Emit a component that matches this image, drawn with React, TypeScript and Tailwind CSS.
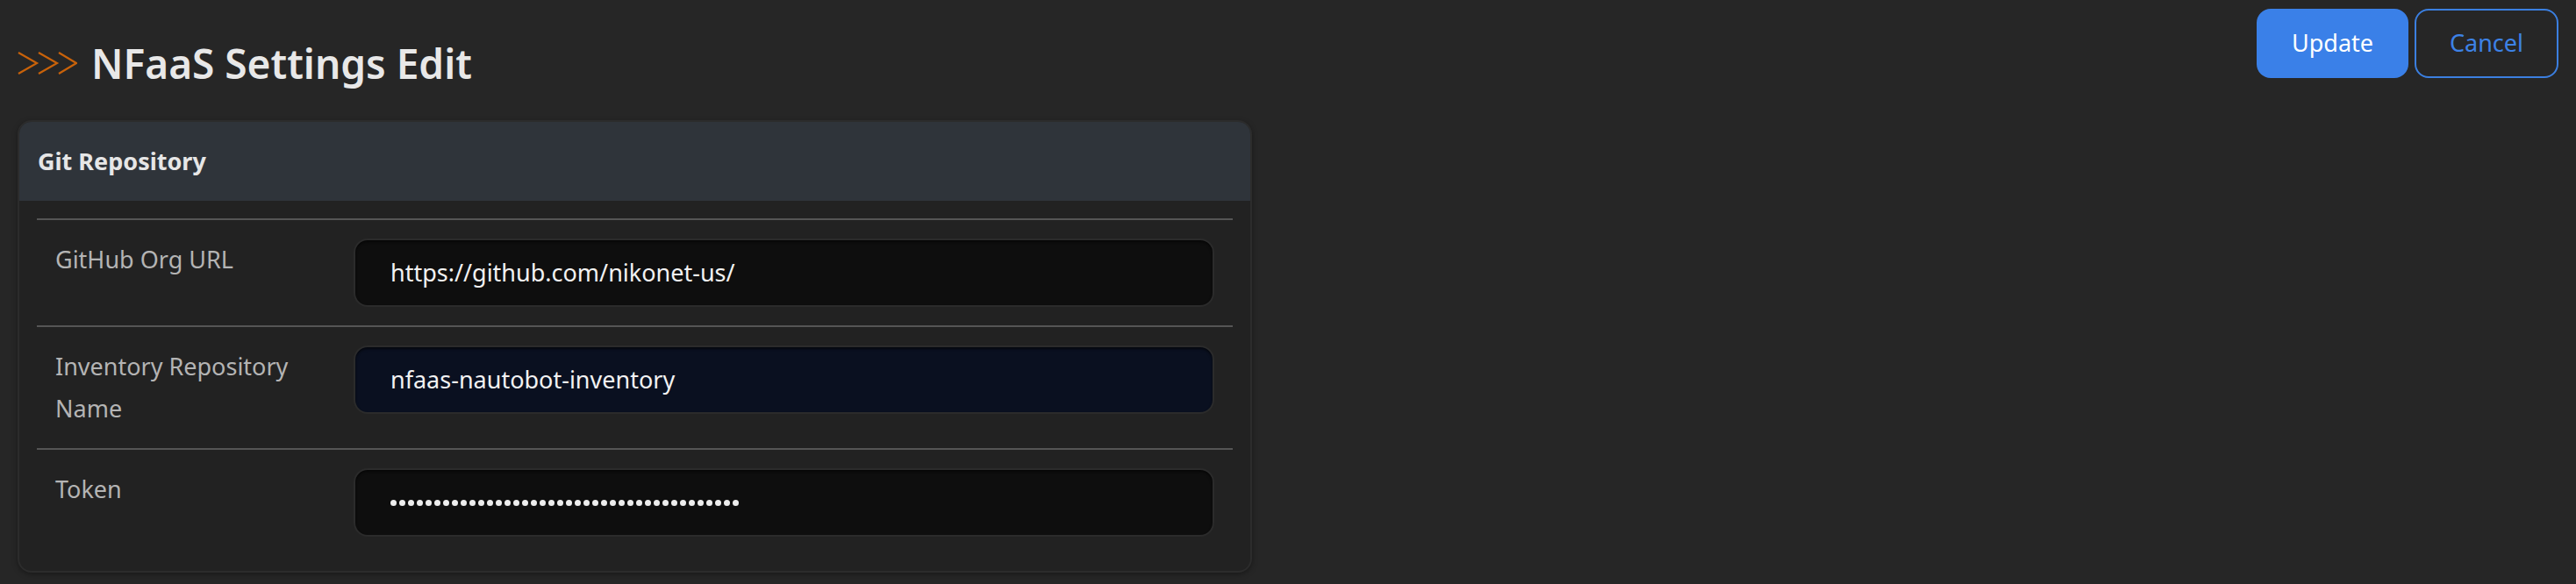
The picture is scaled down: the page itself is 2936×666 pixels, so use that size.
import React from 'react'

const fieldRows = [
  { label: ['GitHub Org URL'], value: 'https://github.com/nikonet-us/', kind: 'text' },
  { label: ['Inventory Repository', 'Name'], value: 'nfaas-nautobot-inventory', kind: 'autofill' },
  { label: ['Token'], value: '', kind: 'password' },
]

const Chevrons = () => (
  <svg width="68" height="26" viewBox="0 0 68 26" fill="none" stroke="#c8620a" strokeWidth="2.2">
    <polyline points="1,1 22,13 1,25" />
    <polyline points="24,1 45,13 24,25" />
    <polyline points="47,1 67,13 47,25" />
  </svg>
)

const App = () => {
  return (
    <div className="min-h-[666px] w-full bg-[#262626] font-['Noto_Sans',sans-serif]">
      {/* Title + actions */}
      <div className="flex items-start justify-between px-[20px]">
        <div className="mt-[42px] flex h-[60px] items-center gap-[16px]">
          <Chevrons />
          <h1 className="text-[46px] font-semibold leading-[60px] text-[#e8e8e8]">NFaaS Settings Edit</h1>
        </div>
        <div className="mt-[10px] flex gap-[7px]">
          <button className="h-[79px] w-[173px] rounded-[16px] bg-[#3a80e8] text-[27px] text-white">Update</button>
          <button className="h-[79px] w-[164px] rounded-[16px] border-2 border-[#3b7fe0] text-[27px] text-[#3d82e6]">
            Cancel
          </button>
        </div>
      </div>

      {/* Git Repository card */}
      <div className="mx-[20px] mt-[35px] w-[1407px] overflow-hidden rounded-[16px] border-2 border-[#2c2c2c] bg-[#222222] shadow-[0_2px_6px_rgba(0,0,0,0.35)]">
        <div className="flex h-[90px] items-center bg-[#2f343a] px-[21px]">
          <span className="text-[27px] font-bold text-[#e6e6e6]">Git Repository</span>
        </div>
        <div className="px-[20px] pt-[20px] pb-[18px]">
          {fieldRows.map((row) => (
            <div key={row.label.join(' ')} className="grid grid-cols-[361px_1fr] border-t-2 border-[#555555] py-[21px]">
              <div className="pl-[21px] text-[27px] leading-[48px] text-[#b4b4b4]">
                {row.label.map((line) => (
                  <div key={line} className="whitespace-nowrap">{line}</div>
                ))}
              </div>
              <div className="pr-[21px]">
                <div
                  className={
                    'flex h-[78px] items-center rounded-[16px] border-2 border-[#2b2b2b] px-[40px] shadow-[inset_0_2px_3px_rgba(0,0,0,0.6)] ' +
                    (row.kind === 'autofill' ? 'bg-[#0a1020]' : 'bg-[#0e0e0e]')
                  }
                >
                  {row.kind === 'password' ? (
                    <div className="flex gap-[3px]">
                      {Array.from({ length: 40 }).map((_, i) => (
                        <span key={i} className="h-[7px] w-[7px] rounded-full bg-[#ededed]" />
                      ))}
                    </div>
                  ) : (
                    <input
                      readOnly
                      value={row.value}
                      className="w-full bg-transparent text-[27px] text-[#f2f2f2] outline-none"
                    />
                  )}
                </div>
              </div>
            </div>
          ))}
        </div>
      </div>
    </div>
  )
}

export default App
